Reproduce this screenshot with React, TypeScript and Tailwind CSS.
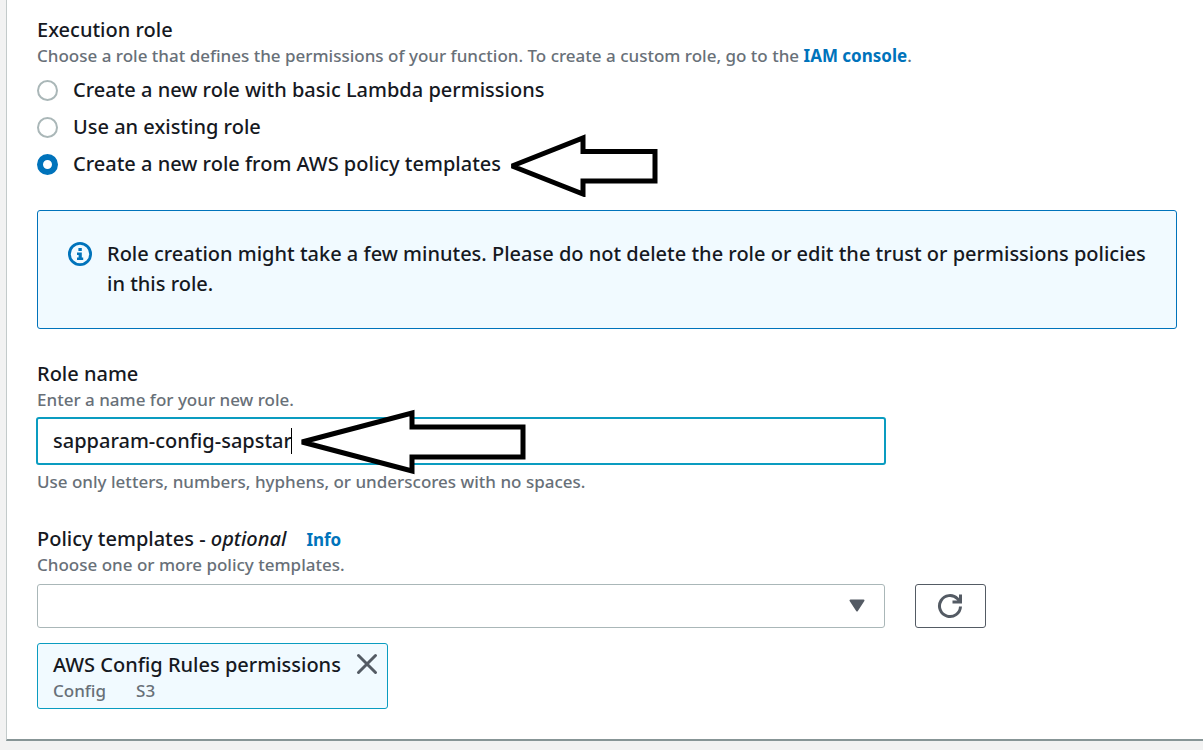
import type { ReactNode } from 'react';

const roles = [
  { id: 'basic', label: 'Create a new role with basic Lambda permissions' },
  { id: 'existing', label: 'Use an existing role' },
  { id: 'templates', label: 'Create a new role from AWS policy templates' },
];

function Hint({ children, id }: { children: ReactNode; id?: string }) {
  return (
    <p id={id} className="text-[17px] leading-[22px] text-[#687078]">
      {children}
    </p>
  );
}

function RoleArrow() {
  return (
    <svg className="block h-[64px] w-[150px]" viewBox="0 0 150 64" fill="#fff" stroke="#000" strokeWidth="5" aria-hidden="true">
      <path d="M4 33 L75 5 V18.500 H147 V48 H75 V61 Z" strokeLinejoin="miter" strokeMiterlimit="2" />
    </svg>
  );
}

function NameArrow() {
  return (
    <svg className="block h-[66px] w-[228px]" viewBox="0 0 228 66" fill="#fff" stroke="#000" strokeWidth="5" aria-hidden="true">
      <path d="M4 33 L114 4 V18 H225 V48 H114 V62 Z" strokeLinejoin="miter" strokeMiterlimit="2" />
    </svg>
  );
}

export default function App() {
  return (
    <div className="min-h-screen bg-[#f2f2f2] pb-[9px] pl-[6px] font-['Noto_Sans',sans-serif] font-medium text-[#16191f]">
      <main className="border-b-2 border-l border-b-[#879596] border-l-[#c3caca] bg-white pt-[15px] pr-[26px] pb-[30px] pl-[30px]">
        <fieldset>
          <legend className="block text-[20px] leading-[30px]">Execution role</legend>
          <Hint>
            Choose a role that defines the permissions of your function. To create a custom role, go to the{' '}
            <a href="#iam" className="font-bold text-[#0073bb]">IAM console</a>.
          </Hint>
          <div className="mt-2 flex flex-col items-start gap-[7px]">
            {roles.map((role) => (
              <label key={role.id} className="relative flex items-center gap-[15px] text-[20px] leading-[30px]">
                <input
                  type="radio"
                  name="role"
                  value={role.id}
                  defaultChecked={role.id === 'templates'}
                  className="size-[21px] shrink-0 appearance-none rounded-full border-2 border-[#aab7b8] bg-white checked:border-[6px] checked:border-[#0073bb]"
                />
                {role.label}
                {role.id === 'templates' && (
                  <span className="absolute top-[-16px] left-[471px]">
                    <RoleArrow />
                  </span>
                )}
              </label>
            ))}
          </div>
        </fieldset>

        <div role="status" className="mt-[31px] flex gap-[15px] rounded-[3px] border border-[#0073bb] bg-[#f1faff] px-[30px] pt-7 pb-[29px] text-[20px] leading-[30px]">
          <svg className="mt-[3px] size-6 shrink-0" viewBox="0 0 24 24" fill="none" aria-hidden="true">
            <circle cx="12" cy="12" r="10.600" stroke="#0073bb" strokeWidth="2.800" />
            <path d="M10.400 6h3.400v3h-3.400zM9 10.500h4.800v5h1.400V18H9v-2.500h1.600V13H9z" fill="#0073bb" />
          </svg>
          <p>
            Role creation might take a few minutes. Please do not delete the role or edit the trust or permissions policies
            in this role.
          </p>
        </div>

        <section className="mt-[30px]">
          <label htmlFor="role-name" className="block text-[20px] leading-[30px]">Role name</label>
          <Hint>Enter a name for your new role.</Hint>
          <div className="mt-[6px] grid grid-cols-12 gap-[30px]">
            <div className="relative col-span-9 -mx-px">
              <input
                id="role-name"
                type="text"
                defaultValue="sapparam-config-sapstar"
                aria-describedby="role-name-rule"
                className="block h-12 w-full rounded-[3px] border-2 border-[#0a9cc0] bg-white px-[15px] pb-[2px] text-[20px] outline-none"
              />
              <span className="absolute top-[11px] left-[255px] h-[26px] w-px bg-black" />
              <span className="absolute top-[-8px] left-[262px]">
                <NameArrow />
              </span>
            </div>
          </div>
          <div className="mt-[6px]">
            <Hint id="role-name-rule">Use only letters, numbers, hyphens, or underscores with no spaces.</Hint>
          </div>
        </section>

        <section className="mt-[31px]">
          <div className="flex h-[30px] items-baseline gap-5 leading-[30px]">
            <label htmlFor="policies" className="text-[20px]">
              Policy templates - <i>optional</i>
            </label>
            <a href="#info" className="text-[17px] font-bold text-[#0073bb]">Info</a>
          </div>
          <Hint>Choose one or more policy templates.</Hint>
          <div className="mt-2 grid grid-cols-12 gap-[30px]">
            <div className="relative col-span-9">
              <select id="policies" className="block h-11 w-full appearance-none rounded-[3px] border border-[#aab7b8] bg-white px-[15px] text-[20px]">
                <option value="" />
              </select>
              <svg className="pointer-events-none absolute top-[15px] right-5 h-[13px] w-4" viewBox="0 0 16 13" fill="#545b64" stroke="#545b64" strokeWidth="2" strokeLinejoin="round" aria-hidden="true">
                <path d="M1.500 1.500h13L8 11.500z" />
              </svg>
            </div>
            <button type="button" aria-label="Refresh" className="flex h-11 w-[71px] items-center justify-center rounded-[3px] border border-[#545b64] bg-white">
              <svg className="size-[26px]" viewBox="0 0 26 26" fill="none" stroke="#545b64" strokeWidth="3" aria-hidden="true">
                <path d="M23.500 13.500A10.500 10.500 0 1 1 20.500 5.700L22.500 8.500" />
                <path d="M23.500 1.500V9H15.500" />
              </svg>
            </button>
          </div>
          <div className="mt-[15px] flex w-fit items-start gap-[15px] rounded-[3px] border border-[#0a9cc0] bg-[#f1faff] pt-[6px] pr-[9px] pb-[6px] pl-[15px]">
            <div>
              <div className="text-[20px] leading-[30px]">AWS Config Rules permissions</div>
              <div className="flex gap-[30px] text-[17px] leading-[22px] text-[#687078]">
                <span>Config</span>
                <span>S3</span>
              </div>
            </div>
            <button type="button" aria-label="Remove AWS Config Rules permissions" className="mt-[3px]">
              <svg className="block size-[22px]" viewBox="0 0 22 22" fill="none" stroke="#545b64" strokeWidth="3" strokeLinecap="round" aria-hidden="true">
                <path d="M2.500 2.500l17 17M19.500 2.500l-17 17" />
              </svg>
            </button>
          </div>
        </section>
      </main>
    </div>
  );
}
